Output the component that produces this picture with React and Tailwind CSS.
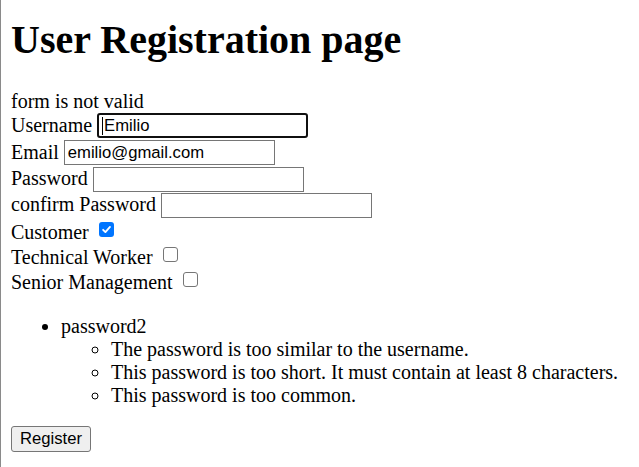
import React from "react";

function TextBox({ value, focused, caret }) {
  return (
    <div
      className={
        "ml-[5px] flex h-[25px] w-[211px] items-center bg-white text-[16.67px] text-black " +
        (focused
          ? "rounded-[3px] border-2 border-[#101010] pl-[3px]"
          : "border border-[#767676] pl-[3px]")
      }
      style={{ fontFamily: '"Liberation Sans", Arial, sans-serif' }}
    >
      {caret && <span className="mr-[1px] inline-block h-[18px] w-px bg-black" />}
      {value}
    </div>
  );
}

function Check({ checked }) {
  if (checked) {
    return (
      <span className="ml-[10px] mb-[3px] flex h-[15px] w-[15px] items-center justify-center rounded-[3px] bg-[#0075ff]">
        <svg width="11" height="11" viewBox="0 0 12 12">
          <path d="M2.3 6.3 L4.8 8.8 L9.8 3.2" fill="none" stroke="white" strokeWidth="2" strokeLinecap="round" strokeLinejoin="round" />
        </svg>
      </span>
    );
  }
  return (
    <span className="ml-[10px] mb-[3px] block h-[15px] w-[15px] rounded-[3px] border border-[#767676] bg-white" />
  );
}

function InputRow({ label, h, children }) {
  return (
    <div className={"flex items-center " + h}>
      <span className="mb-[1px]">{label}</span>
      {children}
    </div>
  );
}

function CheckRow({ label, checked }) {
  return (
    <div className="flex h-[25px] items-center">
      <span className="mt-[4px]">{label}</span>
      <Check checked={checked} />
    </div>
  );
}

export default function App() {
  return (
    <div
      className="min-h-screen border-l border-[#8a8a8a] bg-white pl-[10px] text-black"
      style={{ fontFamily: '"Liberation Serif", "Times New Roman", serif' }}
    >
      <h1 className="pt-[17px] mb-[26px] text-[40px] font-bold leading-[46px]">User Registration page</h1>
      <div className="text-[20px] leading-[23px]">
        <div className="h-[23px] pt-[1px]">form is not valid</div>
        <div>
          <InputRow label="Username" h="h-[27px]">
            <TextBox value="Emilio" focused caret />
          </InputRow>
          <InputRow label="Email" h="h-[27px]">
            <TextBox value="emilio@gmail.com" />
          </InputRow>
          <InputRow label="Password" h="h-[26px]">
            <TextBox value="" />
          </InputRow>
          <InputRow label="confirm Password" h="h-[26px]">
            <TextBox value="" />
          </InputRow>
        </div>
        <CheckRow label="Customer" checked />
        <CheckRow label="Technical Worker" />
        <CheckRow label="Senior Management" />
        <ul className="mt-[22px] list-disc pl-[50px]">
          <li>
            password2
            <ul className="list-[circle] pl-[50px]">
              <li>The password is too similar to the username.</li>
              <li>This password is too short. It must contain at least 8 characters.</li>
              <li>This password is too common.</li>
            </ul>
          </li>
        </ul>
        <button
          type="button"
          className="mt-[19px] h-[26px] w-[80px] rounded-[3px] border border-[#767676] bg-[#efefef] text-[16.67px] leading-none text-black"
          style={{ fontFamily: '"Liberation Sans", Arial, sans-serif' }}
        >
          Register
        </button>
      </div>
    </div>
  );
}
